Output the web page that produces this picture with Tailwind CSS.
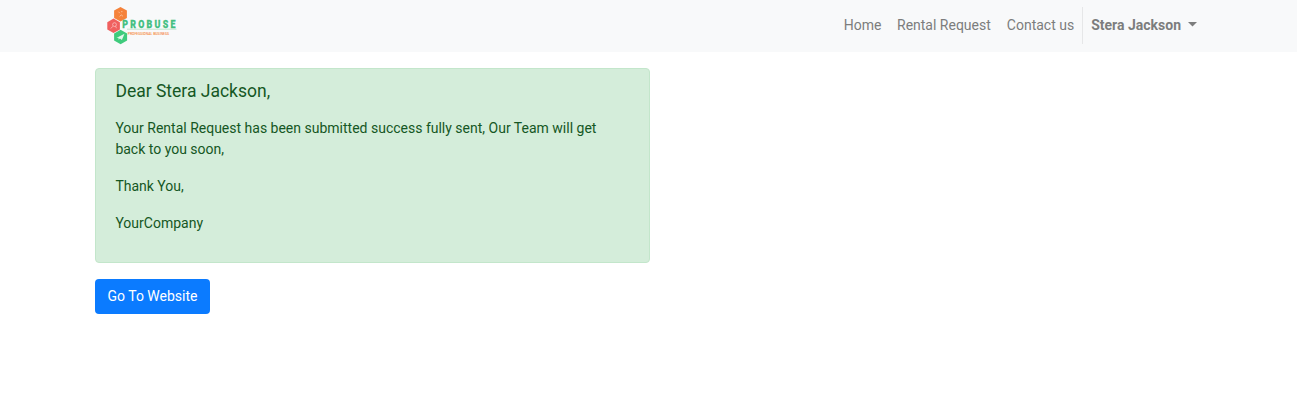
<!DOCTYPE html>
<html lang="en">
<head>
<meta charset="utf-8">
<title>Rental Request</title>
<script src="https://cdn.jsdelivr.net/npm/@tailwindcss/browser@4"></script>
</head>
<body class="bg-white font-['Roboto',sans-serif] text-sm leading-[21px]">
<header class="h-[52px] bg-[#f8f9fa]">
  <div class="mx-auto flex h-[51px] w-[1107px] items-center justify-between">
    <a href="#" aria-label="Probuse" class="block">
      <svg class="block h-[51px] w-[90px]" viewBox="0 0 90 51">
        <path d="M25.5 7l6.4 3.6v7.3l-6.4 3.6-6.4-3.6v-7.3z" fill="#f5823a"/>
        <path d="M18.6 18.6l6.3 3.6v7.2l-6.3 3.6-6.3-3.6v-7.2z" fill="#f0605f"/>
        <path d="M25.6 29.8l6.5 3.6v7.2l-6.5 3.6-6.5-3.6v-7.2z" fill="#3fcb7c"/>
        <g fill="none" stroke="#fff" stroke-opacity=".55" stroke-width=".8">
          <path d="M23.4 11.7l1.5 1.5m-.2 3.3l1.5-1.7 1.8 1.5M26 11.7h1.5"/>
          <circle cx="19.5" cy="24.6" r="1.9"/>
          <path d="M18 26.3l-2.4 2.2M20.7 26.2l.7 2"/>
        </g>
        <path d="M21.3 37.9l8.2-4.1-2.6 6.3-2-1.6-1.3 1.3-.1-2z" fill="#fff" fill-opacity=".85"/>
        <path d="M32 29.2h49.5" stroke="#a9dfbf" stroke-width=".7"/>
        <text transform="translate(27.2 28.2) scale(.82 1)" textLength="65" lengthAdjust="spacing" font-family="Roboto" font-size="10.8" font-weight="900" fill="#42bf80" stroke="#42bf80" stroke-width=".25">PROBUSE</text>
        <text x="32.7" y="34.5" textLength="41.5" lengthAdjust="spacingAndGlyphs" font-family="Roboto" font-size="4" font-weight="500" fill="#f5883c">PROFESSIONAL BUSINESS</text>
      </svg>
    </a>
    <nav class="flex items-center text-[#7c7d7d]">
      <a href="#" class="pr-[7.6px] pl-2">Home</a>
      <a href="#" class="px-2">Rental Request</a>
      <a href="#" class="px-2">Contact us</a>
      <span class="h-[37px] w-px bg-[#e6e7e8]"></span>
      <a href="#" class="flex items-center pr-[5px] pl-2 font-bold">Stera Jackson
        <svg class="-mt-0.5 ml-[7px] h-[5px] w-[9px]" viewBox="0 0 9 5"><path d="M0 0h9L4.5 4.5z" fill="currentColor"/></svg>
      </a>
    </nav>
  </div>
</header>
<main class="mx-auto w-[1107px] pt-4">
  <section class="h-[195px] w-[555px] rounded border border-[#c3e6cb] bg-[#d4edda] pt-3 pr-5 pl-[19.4px] text-[#155724]">
    <h1 class="mb-4 text-[17.5px] leading-[21px]">Dear Stera Jackson,</h1>
    <p class="mb-4">Your Rental Request has been submitted success fully sent, Our Team will get back to you soon,</p>
    <p class="mb-4">Thank You,</p>
    <p>YourCompany</p>
  </section>
  <a href="#" class="mt-4 flex h-[35px] w-[115px] items-center justify-center rounded bg-[#0b7bff] text-white">Go To Website</a>
</main>
</body>
</html>
